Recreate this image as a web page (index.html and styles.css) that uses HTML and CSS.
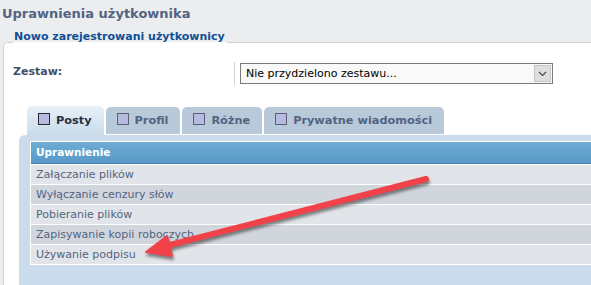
FILE: index.html
```html
<!DOCTYPE html>
<html lang="pl">
<head>
<meta charset="UTF-8">
<meta name="viewport" content="width=device-width, initial-scale=1.0">
<title>Uprawnienia użytkownika</title>
<link rel="stylesheet" href="styles.css">
</head>
<body>
<h1>Uprawnienia użytkownika</h1>

<fieldset class="perms">
    <legend>Nowo zarejestrowani użytkownicy</legend>

    <div class="set-row">
        <label class="set-label" for="roleSet">Zestaw:</label>
        <div class="set-field">
            <div class="select" id="roleSet">
                <span class="select-text">Nie przydzielono zestawu...</span>
                <span class="select-btn">
                    <svg width="9" height="6" viewBox="0 0 9 6"><path d="M1 1l3.5 3.5L8 1" fill="none" stroke="#4a4a4a" stroke-width="1.2"/></svg>
                </span>
            </div>
        </div>
    </div>

    <div class="tabs-wrap">
        <ul class="tabs">
            <li class="tab active"><span class="box"></span>Posty</li>
            <li class="tab"><span class="box"></span>Profil</li>
            <li class="tab"><span class="box"></span>Różne</li>
            <li class="tab"><span class="box"></span>Prywatne wiadomości</li>
        </ul>
        <div class="panel">
            <table class="perm-table">
                <thead>
                    <tr><th>Uprawnienie</th></tr>
                </thead>
                <tbody>
                    <tr><td>Załączanie plików</td></tr>
                    <tr><td>Wyłączanie cenzury słów</td></tr>
                    <tr><td>Pobieranie plików</td></tr>
                    <tr><td>Zapisywanie kopii roboczych</td></tr>
                    <tr><td>Używanie podpisu</td></tr>
                </tbody>
            </table>
        </div>
    </div>
</fieldset>

<!-- annotation arrow drawn over the screenshot -->
<svg class="arrow" width="591" height="285" viewBox="0 0 591 285">
    <g class="arrow-shape">
        <line x1="426" y1="179" x2="162" y2="247" stroke="#f1424a" stroke-width="6" stroke-linecap="round"/>
        <polygon points="146,252 172,256 167,236" fill="#f1424a" stroke="#f1424a" stroke-width="2" stroke-linejoin="round"/>
    </g>
</svg>
</body>
</html>
```

FILE: styles.css
```css
* { box-sizing: border-box; }
html, body { margin: 0; padding: 0; }
body {
    font-family: "DejaVu Sans", Verdana, sans-serif;
    background: #ecedee;
    width: 591px;
    height: 285px;
    overflow: hidden;
    position: relative;
}
h1 {
    margin: 0;
    padding: 6px 0 0 2px;
    font-size: 13px;
    line-height: 16px;
    color: #536482;
}
.perms {
    margin: 8px 0 0 3px;
    padding: 8px 0 0 9px;
    border: 1px solid #d3d3d3;
    border-right: none;
    border-bottom: none;
    border-radius: 5px 0 0 0;
    background: #fff;
    min-width: 0;
}
.perms legend {
    padding: 0 2px 10px 1px;
    font-size: 11px;
    line-height: 14px;
    font-weight: bold;
    color: #115098;
}
.set-row { display: flex; height: 23px; }
.set-label {
    width: 222px;
    border-right: 1px solid #d2d2d2;
    padding-top: 3px;
    font-size: 11px;
    line-height: 14px;
    font-weight: bold;
    color: #425067;
}
.set-field { padding: 1px 0 0 5px; }
.select {
    display: flex;
    width: 313px;
    height: 21px;
    border: 1px solid #7a7a7a;
    background: #f9f9f9;
}
.select-text { flex: 1; padding-left: 5px; font-size: 11px; line-height: 19px; color: #000; }
.select-btn {
    width: 17px;
    height: 17px;
    margin: 1px;
    display: flex;
    align-items: center;
    justify-content: center;
    background: #dedede;
    border: 1px solid #c6c6c6;
}
.tabs-wrap { margin: 21px 0 0 6px; }
.tabs {
    list-style: none;
    margin: 0 0 0 8px;
    padding: 0;
    display: flex;
    align-items: flex-start;
    gap: 2px;
    height: 29px;
}
.tab {
    display: flex;
    align-items: center;
    gap: 6px;
    height: 27px;
    margin-top: 1px;
    padding: 0 12px 0 11px;
    background: #b8c9d9;
    border-radius: 5px 5px 0 0;
    font-size: 11.3px;
    font-weight: bold;
    color: #536482;
}
.tab.active {
    height: 29px;
    margin-top: 0;
    background: linear-gradient(#e8f0f8, #cadceb);
    color: #28313f;
}
.box {
    width: 12px;
    height: 12px;
    margin-bottom: 4px;
    border: 1px solid #5a6077;
    background: #b7bbe0;
}
.tab.active .box { border-color: #2a2a33; }
.panel {
    background: #cadceb;
    border-radius: 6px 0 0 0;
    padding: 6px 0 0 11px;
    height: 150px;
    overflow: hidden;
}
.perm-table {
    width: calc(100% + 10px);
    border-spacing: 1px;
    background: #fff;
    font-size: 11px;
}
.perm-table th {
    padding: 0 5px;
    line-height: 21px;
    text-align: left;
    font-size: 10.5px;
    color: #fff;
    background: linear-gradient(#6eacd3, #5898c6);
    border-bottom: 1px solid #3f7db2;
}
.perm-table td { padding: 0 5px; line-height: 19px; color: #536482; }
.perm-table tbody tr:nth-child(odd) td { background: #e1e4e8; }
.perm-table tbody tr:nth-child(even) td { background: #d1d6dd; }
.arrow { position: absolute; left: 0; top: 0; pointer-events: none; }
.arrow-shape { filter: drop-shadow(1px 3px 1.5px rgba(0, 0, 0, 0.45)); }
```
